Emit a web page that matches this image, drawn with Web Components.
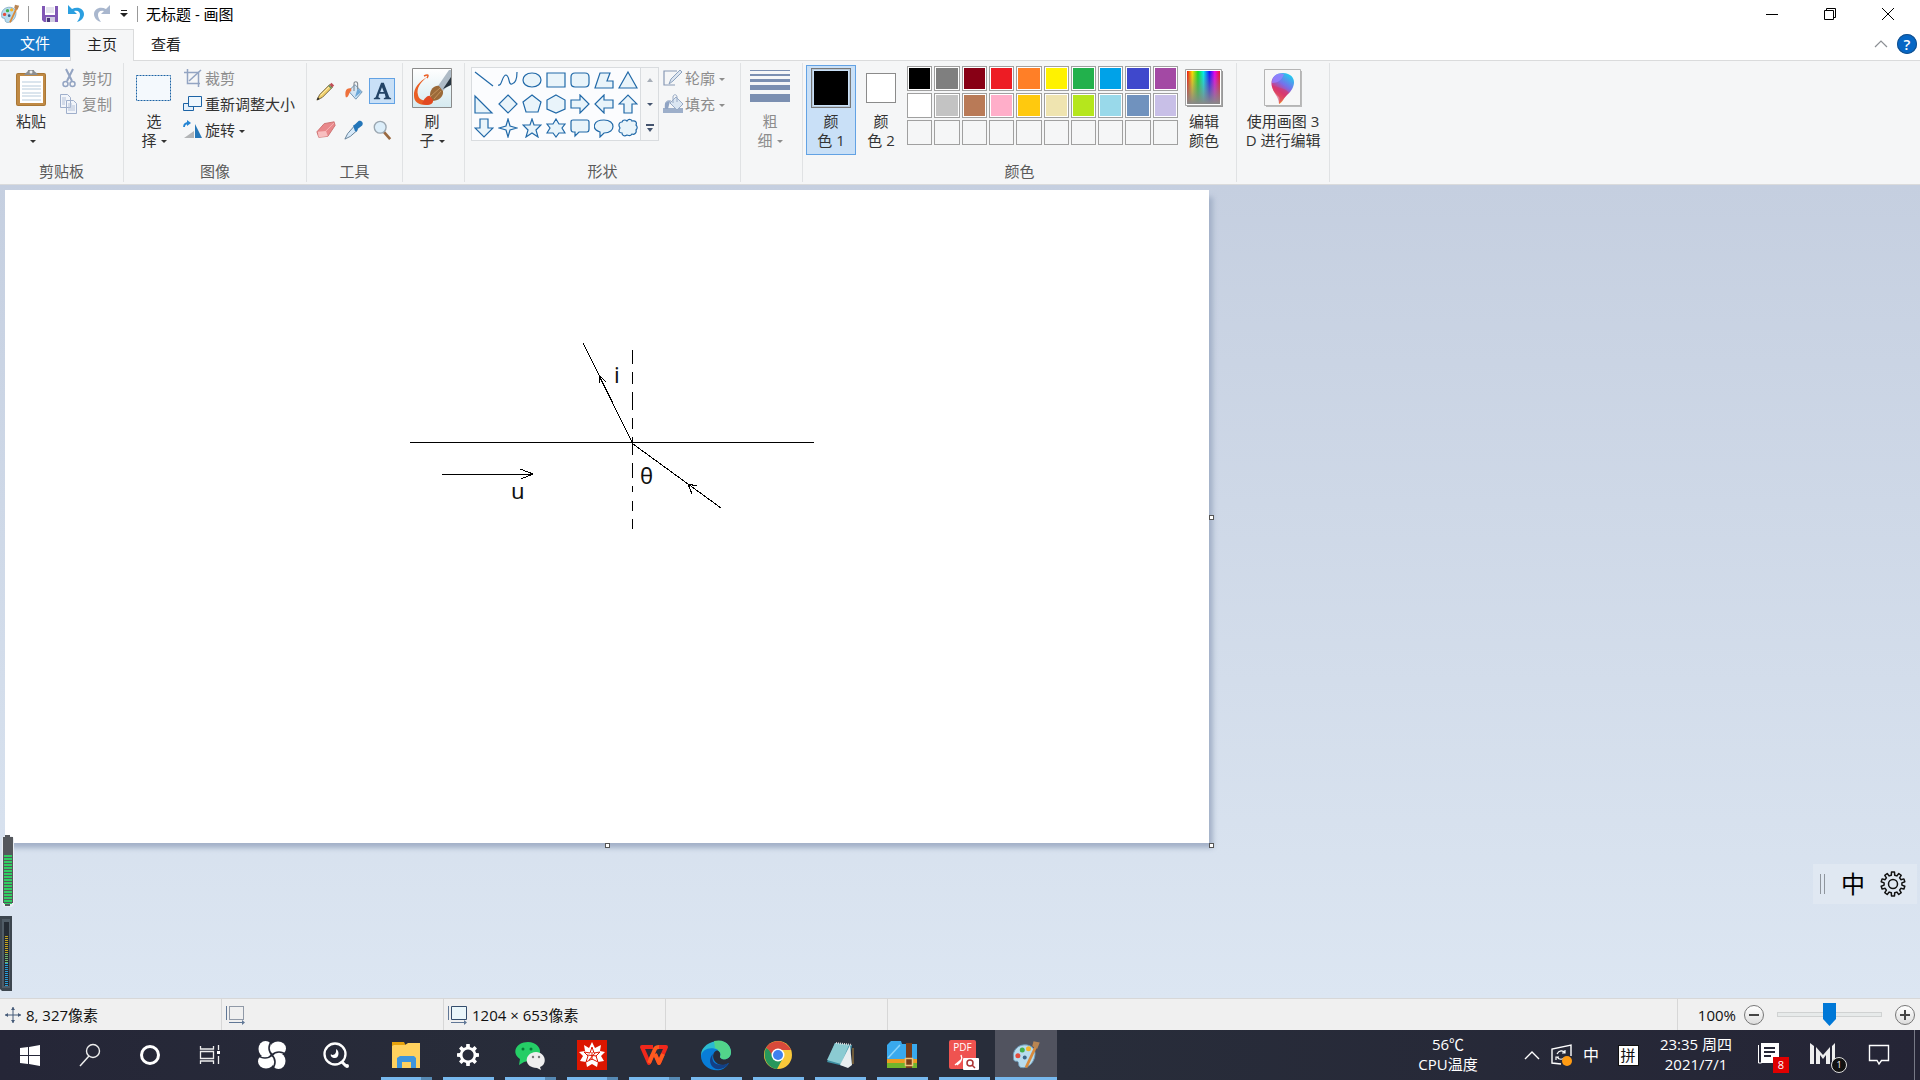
<!DOCTYPE html>
<html lang="zh-CN">
<head>
<meta charset="utf-8">
<title>无标题 - 画图</title>
<style>
    html, body {
        height: 100%;
        margin: 0;
    }

    body {
        overflow: hidden;
        font: 15px/20px "Open Sans", "Noto Sans CJK SC", sans-serif;
        color: #222;
    }
</style>
</head>
<body>
<paint-app></paint-app>

<script>
const define = (name, html, setup) => {
    const template = document.createElement('template');
    template.innerHTML = html;

    customElements.define(name, class extends HTMLElement {
        constructor() {
            super();
            this.attachShadow({ mode: 'open' });
            this.shadowRoot.appendChild(template.content.cloneNode(true));
        }

        connectedCallback() {
            if (setup) setup(this, this.shadowRoot);
        }
    });
};

// outline of a toothed wheel, centred in a box of 26
const wheel = (outer, inner, teeth) => {
    const points = [];
    for (let i = 0; i < teeth; i++) {
        [[-.3, inner], [-.2, outer], [.2, outer], [.3, inner]].forEach(([shift, r]) => {
            const a = (i + shift) / teeth * Math.PI * 2;
            points.push(`${(13 + r * Math.sin(a)).toFixed(1)} ${(13 - r * Math.cos(a)).toFixed(1)}`);
        });
    }
    return `M${points.join('L')}z`;
};

// name: [viewBox width, viewBox height, markup]
const palette = `
    <path d="M2 14C1 8 6 3 13 4c5 1 7 5 6 9-1 6-6 10-11 9-3-1-1-4-3-5-2 0-3 0-3-3z" fill="#b8dcee" stroke="#6b9ab8" stroke-width=".8"/>
    <circle cx="5.500" cy="12.500" r="2" fill="#e34b3c"/><circle cx="9" cy="8" r="2" fill="#43b04b"/>
    <circle cx="14" cy="7" r="2" fill="#f5b32a"/><circle cx="11" cy="14" r="1.600" fill="#3c6688"/>
    <path d="M20 5 12 22" stroke="#d88a3c" stroke-width="2.200"/><path d="M18 1l5 1-2 5-4-2z" fill="#b98552"/>`;

const ICONS = {
    palette: [24, 24, palette],
    save: [18, 18, `<path d="M1 1h16v16H3l-2-2z" fill="#8057b5"/><path d="M4 1h10v9H4z" fill="#fff"/><path d="M5 3h8M5 5h8M5 7h8" stroke="#c9c5dd"/><path d="M5 12h9v5H5z" fill="#cfcbe0"/><path d="M6 13h3v4H6z" fill="#49387a"/>`],
    undo: [18, 18, `<path d="M1 0v9h9L7 6c4-1 6 1 6 4 0 2-1 4-3 7 4-1 7-4 7-8 0-5-6-8-12-5z" fill="#2b9fe0"/>`],
    redo: [18, 18, `<path d="M17 0v9H8l3-3C7 5 5 7 5 10c0 2 1 4 3 7-4-1-7-4-7-8 0-5 6-8 12-5z" fill="#a9b7ce"/>`],
    more: [8, 8, `<path d="M1 .5h6" stroke="#222"/><path d="M0 3h8L4 7z" fill="#222"/>`],
    min: [14, 14, `<path d="M1 7.500h12" stroke="#000"/>`],
    restore: [14, 14, `<path d="M1.500 3.500h9v9h-9zM3.500 3v-1.500h9v9H11" fill="none" stroke="#000"/>`],
    close: [14, 14, `<path d="M1 1l12 12M13 1 1 13" stroke="#000"/>`],
    up: [14, 14, `<path d="M1 10l6-6 6 6" fill="none" stroke="#8b8f94" stroke-width="1.200"/>`],
    paste: [32, 38, `
        <rect x="1" y="4" width="30" height="33" rx="2" fill="#a97735"/><rect x="2" y="5" width="28" height="31" rx="1" fill="#c08a45"/>
        <path d="M5 7h23v27H5z" fill="#fff"/><path d="M7 13h19M7 17h19M7 20h19M7 24h19M7 27h19M7 31h19" stroke="#b7cbdc"/>
        <path d="M9 6c2-3 4-3 4-5h6c0 2 3 2 4 5z" fill="#8c8f92"/><circle cx="16" cy="3" r="1.500" fill="#eee"/>`],
    cut: [20, 20, `<path d="M6 1l6 12M13 1 7 13" stroke="#93a4c2" stroke-width="2"/><circle cx="5.500" cy="16" r="2.500" fill="none" stroke="#93a4c2" stroke-width="1.500"/><circle cx="12.500" cy="16" r="2.500" fill="none" stroke="#93a4c2" stroke-width="1.500"/>`],
    copy: [20, 20, `<path d="M.5.500h7l3 3v10H.5zM6.500 6.500h7l3 3v10h-10z" fill="#f2f5fa" stroke="#9fafcb"/><path d="M2 4h4M2 6h4M2 8h3M2 10h3M8 10h4M8 12h7M8 14h7M8 16h7" stroke="#b4c1d8"/>`],
    select: [36, 26, `<rect x=".5" y=".5" width="34" height="25" fill="#f4f9fd" stroke="#1c63a5" stroke-dasharray="2 1"/>`],
    crop: [20, 20, `<path d="M4.500 1v14.500H17M1 4.500h14.500V19" fill="none" stroke="#93a4c2" stroke-width="1.500"/><path d="M6 13 18 2" stroke="#93a4c2" stroke-width="1.500"/>`],
    resize: [20, 20, `<path d="M.5 9.500h10v7H.5z" fill="#e3effa" stroke="#1c63a5"/><path d="M5.500 2.500h13v10h-13z" fill="#edf6fd" stroke="#1c63a5"/>`],
    rotate: [20, 20, `<path d="M1 18h10V11z" fill="#b2b4b6"/><path d="M12 18V4l7 14z" fill="#2677b8"/><path d="M1 7c0-3 2-4 5-4" fill="none" stroke="#2484d3" stroke-width="1.800"/><path d="M4 0l4 3-4 3z" fill="#2484d3"/>`],
    pencil: [22, 22, `<path d="M1 21l3-6L15 4l3 3L7 18z" fill="#f1d06b" stroke="#6d5a32"/><path d="M5 16 16 5" stroke="#fff1b8"/><path d="M15 4l2-2 3 3-2 2z" fill="#c14f58"/><path d="M14 5l3 3" stroke="#5e8b67" stroke-width="1.500"/><path d="M1 21l1-3 2 2z" fill="#222"/>`],
    bucket: [22, 22, `<path d="M5 11 12 4l8 8-7 8z" fill="#d2e5f5" stroke="#638bac"/><path d="M12 18l7-6-4-4z" fill="#6ba7d8"/><path d="M8 8C1 7 1 13 2 18c4 0 3-6 6-7z" fill="#ee713c"/><path d="M11 11V3c0-3 4-3 4 0v6" fill="none" stroke="#83898f" stroke-width="1.200"/>`],
    text: [22, 22, `<path d="M10 2h3l6 16 2 1v1h-8v-1l2-1-1-4H8l-1 4 2 1v1H2v-1l2-1zM11 7l-2 5h4z" fill="#234467" fill-rule="evenodd"/>`],
    eraser: [22, 22, `<path d="M1 13 9 4l11-2 1 4-8 12-10 1z" fill="#e9888b" stroke="#c96d6d"/><path d="M2 13l9-1 2 6-10 1z" fill="#f8bfc0"/><path d="M11 12l9-9" stroke="#f8b7b8"/>`],
    dropper: [22, 22, `<path d="M1 21l3-6 7-8 4 4-8 7z" fill="#d7eafa" stroke="#5d7992"/><path d="M10 6l2-1 4-4c3-1 6 2 4 5l-5 4-1 3-2-1z" fill="#2476b9"/>`],
    lens: [22, 22, `<path d="M13 13l7 8" stroke="#9a6940" stroke-width="3"/><circle cx="9" cy="8" r="6.500" fill="#dceefa" stroke="#9ba7b1" stroke-width="1.500"/>`],
    brush: [40, 40, `
        <defs><linearGradient id="b" x2="0" y2="1"><stop stop-color="#fff"/><stop offset="1" stop-color="#d5eaf0"/></linearGradient></defs>
        <path d="M.5.500h39v39H.5z" fill="url(#b)" stroke="#8b8b8b"/>
        <path d="M15 9C9 14 4 20 6 27c1 6 9 7 14 4l1 2c0 3-3 4-7 4C7 37 2 34 2 28c-1-8 6-15 13-19z" fill="#ea5f25"/>
        <path d="M15 10c2-3 1-4-3-2" stroke="#ea5f25" fill="none" stroke-width="1.500"/>
        <path d="M26 18 37 2h2v12l-8 9z" fill="#aebbc6"/><path d="M31 21 39 9v8z" fill="#27343f"/>
        <path d="M18 27c0-6 5-10 9-9l4 5c1 6-5 10-11 10z" fill="#9b6a39"/><path d="M19 28l9-8M22 31l7-8" stroke="#c4935c"/>
        <path d="M10 36c2-6 6-9 8-8l3 4c0 4-5 6-11 4z" fill="#e14922"/>`],
    outline: [20, 20, `<path d="M14 3H1v14h11" fill="none" stroke="#8999b5" stroke-width="1.200"/><path d="M6 16l2-5 9-9 2 2-9 9z" fill="#dce5f0" stroke="#8da3bf"/>`],
    fill: [20, 20, `<path d="M0 14h20v5H0z" fill="#9dafca"/><path d="M3 14C1 8 4 6 8 7M7 9l6-6 7 7-6 6z" fill="#dbe6f2" stroke="#98aac5"/><path d="M10 9V3c0-3 4-3 4 0v5" fill="none" stroke="#98aac5"/><path d="M2 15c-1-5 1-8 5-8l-2 8z" fill="#8fa3c3"/>`],
    size: [40, 36, `<g fill="#7b8fb1"><path d="M0 0h40v1H0zM0 4h40v2H0zM0 9h40v3H0zM0 15h40v5H0zM0 24h40v8H0z"/></g>`],
    spectrum: [38, 38, `
        <defs><linearGradient id="s"><stop stop-color="#e11"/><stop offset=".16" stop-color="#fd0"/><stop offset=".33" stop-color="#1d2"/><stop offset=".5" stop-color="#0ee"/><stop offset=".68" stop-color="#11f"/><stop offset=".84" stop-color="#e0e"/><stop offset="1" stop-color="#e12"/></linearGradient>
        <linearGradient id="g" x2="0" y2="1"><stop stop-color="#888" stop-opacity="0"/><stop offset="1" stop-color="#888"/></linearGradient></defs>
        <path d="M2 2h36v36H2z" fill="#999"/><path d="M.5.500h36v36H.5z" fill="#fff" stroke="#a5a5a5"/><path d="M2 2h33v33H2z" fill="url(#s)"/><path d="M2 2h33v33H2z" fill="url(#g)"/>`],
    paint3d: [38, 38, `
        <defs><linearGradient id="p" x1=".8" x2=".3" y2="1"><stop stop-color="#18d5ef"/><stop offset=".4" stop-color="#7770ea"/><stop offset=".65" stop-color="#dc3774"/><stop offset="1" stop-color="#ffbd19"/></linearGradient></defs>
        <path d="M2 2h36v36H2z" fill="#bbb"/><path d="M.5.500h36v36H.5z" fill="#f7f7f7" stroke="#b5b5b5"/>
        <path d="M19 4c15 1 13 15 4 22-4 4-4 7-8 9 0-3 1-5 0-7C3 18 6 4 19 4z" fill="url(#p)"/><path d="M8 14C8 6 15 3 20 5c-2 6-6 9-12 9z" fill="#987fff" opacity=".8"/><path d="M8 16c8 4 12 2 17 8-5 4-6 7-10 11 0-8-6-10-7-19z" fill="#d73769" opacity=".6"/>`],
    move: [18, 18, `<path d="M9 1v16M1 9h16" stroke="#455a78"/><path d="M7 4l2-3 2 3zM7 14l2 3 2-3zM4 7 1 9l3 2zM14 7l3 2-3 2z" fill="#455a78"/>`],
    selsize: [20, 20, `<path d="M3.500 1.500h14v13h-14z" fill="none" stroke="#31435e" stroke-dasharray="1 1"/><path d="M.5 1v14M3 17.500h15" stroke="#607796"/><path d="M16 15l3 2.500-3 2.500z" fill="#607796"/>`],
    docsize: [20, 20, `<path d="M3.500 1.500h15v13h-15z" fill="#eaf6fa" stroke="#344d6c"/><path d="M.5 1v14M3 17.500h15" stroke="#607796"/><path d="M16 15l3 2.500-3 2.500z" fill="#607796"/>`],
    gear: [26, 26, `<path d="${wheel(12, 9, 10)}" fill="none" stroke="#111" stroke-width="1.500" stroke-linejoin="round"/><circle cx="13" cy="13" r="4.500" fill="none" stroke="#111" stroke-width="1.500"/>`],
    start: [20, 22, `<path d="M0 4l8-1v8H0zM9 3l11-2v10H9zM0 12h8v8l-8-1zM9 12h11v10L9 20z" fill="#fff"/>`],
    search: [22, 24, `<circle cx="14" cy="8" r="6.500" fill="none" stroke="#eee" stroke-width="1.400"/><path d="M10 13 1 23" stroke="#eee" stroke-width="1.500"/>`],
    cortana: [22, 22, `<circle cx="11" cy="11" r="8.500" fill="none" stroke="#fff" stroke-width="3"/>`],
    taskview: [22, 22, `<path d="M1.500 2v3h13V2M1.500 20v-3h13v3M1.500 7.500h13v7h-13z" fill="none" stroke="#eee" stroke-width="1.300"/><path d="M19.500 1v5M19.500 12v8" stroke="#eee" stroke-width="1.300"/><path d="M18 7h3v3h-3z" fill="#fff"/>`],
    pinwheel: [28, 28, `
        <g fill="#fff">${[0, 90, 180, 270].map((a) => `<ellipse cx="20" cy="7.500" rx="8" ry="7" transform="rotate(${a} 14 14)"/>`).join('')}</g>
        <g fill="none" stroke="#252836" stroke-width="1.600">${[0, 90, 180, 270].map((a) => `<path d="M14 14c-4-4-4-10 0-14" transform="rotate(${a} 14 14)"/>`).join('')}</g>`],
    eye: [26, 26, `<circle cx="12" cy="12" r="10.500" fill="none" stroke="#fff" stroke-width="2.300"/><path d="M19 20l4 4" stroke="#fff" stroke-width="3"/><circle cx="24" cy="24" r="2" fill="#fff"/><path d="M13 7c4 2 3 9-1 9-3 0-5-2-4-4 1 2 6 1 5-5z" fill="#fff"/>`],
    folder: [28, 26, `<path d="M0 0h12l2 4H0z" fill="#e6a20c"/><path d="M0 4l2-1h11l3-2h12v25H0z" fill="#ffd15e"/><path d="M5 26V16l3-2h14l2 2v10h-5v-6h-9v6z" fill="#3f95dc"/>`],
    cog: [26, 26, `<path d="${wheel(12, 9, 8)}M13 7a6 6 0 1 0 .1 0z" fill="#fff" fill-rule="evenodd"/>`],
    wechat: [30, 30, `<path d="M13 2c16 1 16 18 0 19l-4 1-5 3 1-6C-4 13 1 2 13 2z" fill="#25ce66"/><circle cx="8" cy="9" r="1.500" fill="#087b38"/><circle cx="16" cy="9" r="1.500" fill="#087b38"/><path d="M21 12c11 1 11 13 4 15l1 3-4-2c-13 0-14-15-1-16z" fill="#eee"/><circle cx="18" cy="17" r="1.200" fill="#777"/><circle cx="24" cy="17" r="1.200" fill="#777"/>`],
    wolfram: [30, 30, `<path d="M0 0h30v30H0z" fill="#dc1600"/><path d="M15 2l3 6 6-3-1 6 5 1-4 4 3 5-6 1-1 5-5-3-5 3-1-5-6-1 3-5-4-4 6-1-1-6 5 3z" fill="#fff"/><path d="M15 7l2 6 6-1-4 4 2 6-6-3-6 3 2-6-4-4 6 1zM15 12v8M10 15l10 1M12 20l6-7" fill="none" stroke="#dc1600"/>`],
    wps: [30, 24, `<g fill="none" stroke-width="4" stroke-linejoin="round"><path d="M14 4H3l7 16 4-9" stroke="#f0281c"/><path d="M20 4h7l-7 16-4-9" stroke="#f0281c"/><path d="M10 20l6-14q1-2 4-2M16 11l4 9 4-9" stroke="#ff5a1f"/></g>`],
    edge: [30, 30, `<path d="M0 15C0 0 29-6 30 12c0 8-9 9-11 5 2-4-2-8-7-7-5 0-12 3-12 10z" fill="#2bbbd0"/><path d="M13 1c12-3 17 6 17 11 0 8-9 9-11 5 2-4-1-7-5-9z" fill="#52d48a"/><path d="M0 16C1 9 10 6 17 10c-6 1-7 10 0 14 4 2 8 1 11-1-8 14-28 6-28-7z" fill="#087dd7"/><path d="M12 14c-3 8 4 14 16 9-6 9-18 8-19-2 0-3 1-5 3-7z" fill="#143f84"/>`],
    chrome: [28, 28, `<circle cx="14" cy="14" r="14" fill="#f9c83a"/><path d="M14 14 2 7C6 0 22-2 27 9H14z" fill="#d84a3b"/><path d="M2 7C-2 16 3 27 13 28l6-11-5-3z" fill="#27975b"/><path d="M3 6l7 11 4-8h12C21-3 7-1 3 6z" fill="#d84a3b"/><circle cx="14" cy="14" r="6.500" fill="#fff"/><circle cx="14" cy="14" r="5" fill="#4080ee"/>`],
    note: [28, 28, `<path d="M9 2l17 2-4 22-21-5z" fill="#3f91a4"/><path d="M9 2l14 2-8 19L1 19z" fill="#8bcbd2"/><path d="M24 4l2 20-4 3-8-3z" fill="#e8eef0"/><path d="M10 2l16 2" stroke="#ddd" stroke-width="2" stroke-dasharray="1 1"/><path d="M27 7v16" stroke="#b58a3a"/>`],
    archive: [30, 28, `<path d="M0 4l4-4h10l1 3h15v15H0z" fill="#39a9ed"/><path d="M0 18h30v5H0z" fill="#ed9b20"/><path d="M0 22h30v5H0z" fill="#70b52c"/><path d="M1 17 13 4" stroke="#8bd5fa" stroke-width="1.500"/><path d="M19 2h6v25h-6z" fill="#773c19"/><path d="M18.500 17.500h7v7h-7z" fill="none" stroke="#ebc37c" stroke-width="1.500"/>`],
    monitor: [22, 22, `<path d="M20 12V1L1 5v14l9 1" fill="none" stroke="#fff" stroke-width="1.400"/><path d="M6 10c2-4 6-4 8-1M14 6v3h-3M14 13c-2 3-6 3-8 0M5 16v-3h3" fill="none" stroke="#fff" stroke-width="1.200"/><circle cx="16" cy="17" r="5" fill="#ff9b13"/>`],
    trayup: [16, 12, `<path d="M1 10l7-7 7 7" fill="none" stroke="#fff" stroke-width="1.400"/>`],
    news: [22, 22, `<path d="M3 1h18v20H3z" fill="#fff"/><path d="M6 6h11M6 10h11M6 14h7" stroke="#252636" stroke-width="2"/><path d="M.5 3v18h3" fill="none" stroke="#fff"/>`],
    mail: [28, 22, `<path d="M0 1l4 3v18H0zM6 22V5l7 8 7-8v17h-4v-9l-3 4-3-4v9zM22 22V4l3-3v21z" fill="#eee"/>`],
    notice: [22, 22, `<path d="M1.500 1.500h19v15h-7L11 20l-2-3.500H1.500z" fill="none" stroke="#fff" stroke-width="1.400"/>`],
};

const SHAPES = {
    直线: 'M1 2l18 14',
    曲线: 'M0 15c4 2 4-10 8-10 4 1 2 10 6 9 4-1 5-7 5-12',
    椭圆形: 'M10 3c12 0 12 14 0 14S-2 3 10 3z',
    矩形: 'M1 3h18v14H1z',
    圆角矩形: 'M5 3h10q4 0 4 4v6q0 4-4 4H5q-4 0-4-4V7q0-4 4-4z',
    多边形: 'M6 3h10l-3 8h6v7H1z',
    三角形: 'M10 2l9 16H1z',
    直角三角形: 'M1 2v17h17z',
    菱形: 'M10 1l9 9-9 9-9-9z',
    五边形: 'M10 1l9 7-3 10H4L1 8z',
    六边形: 'M10 1l9 5v9l-9 4-9-4V6z',
    右箭头: 'M1 6h9V1l9 9-9 9v-5H1z',
    左箭头: 'M19 6h-9V1l-9 9 9 9v-5h9z',
    上箭头: 'M6 19v-9H1l9-9 9 9h-5v9z',
    下箭头: 'M6 1v9H1l9 9 9-9h-5V1z',
    四角星形: 'M10 1l2 7 7 2-7 2-2 7-2-7-7-2 7-2z',
    五角星形: 'M10 1l2 6h7l-5 5 2 7-6-4-6 4 2-7-5-5h7z',
    六角星形: 'M10 1l3 5h6l-3 4 3 5h-6l-3 4-3-4H1l3-5-3-4h6z',
    圆角矩形标注: 'M3 2h14q2 0 2 2v7q0 3-2 3H9l-4 4v-4H3q-2 0-2-3V4q0-2 2-2z',
    椭圆形标注: 'M10 2c12 0 12 13 0 13l-4 4v-5C-3 11-1 2 10 2z',
    云形标注: 'M4 4c1-3 4-2 5-1 2-3 5-1 5 0 4-1 5 2 4 4 2 2 1 4 0 5 1 3-2 5-4 4-2 3-4 1-5 1-3 2-5 0-5-2-3 0-4-2-2-5C0 7 1 4 4 4z',
};

const COLORS = [
    '#000000', '#7f7f7f', '#880015', '#ed1c24', '#ff7f27', '#fff200', '#22b14c', '#00a2e8', '#3f48cc', '#a349a4',
    '#ffffff', '#c3c3c3', '#b97a57', '#ffaec9', '#ffc90e', '#efe4b0', '#b5e61d', '#99d9ea', '#7092be', '#c8bfe7',
    '', '', '', '', '', '', '', '', '', '',
];

// shared reset for native buttons inside shadow roots
const reset = `
    button {
        margin: 0;
        padding: 0;
        border: 0;
        background: none;
        color: inherit;
        font: inherit;
        display: flex;
        align-items: center;
        justify-content: center;
    }
`;

define('paint-icon', `
    <style>
        :host { display: inline-flex; flex: none; }
        svg { display: block; overflow: visible; }
    </style>
    <svg aria-hidden="true"></svg>
`, (host, root) => {
    const [w, h, markup] = ICONS[host.getAttribute('name')];
    const svg = root.querySelector('svg');
    const size = Number(host.getAttribute('size')) || w;
    svg.setAttribute('viewBox', `0 0 ${w} ${h}`);
    svg.setAttribute('width', size);
    svg.setAttribute('height', Math.round(size * h / w));
    svg.innerHTML = markup;
});

define('drop-arrow', `
    <style>
        :host {
            display: inline-block;
            vertical-align: middle;
            margin-left: 4px;
            border: 3px solid transparent;
            border-top-color: currentColor;
            border-bottom: 0;
        }
    </style>
`);

define('title-bar', `
    <style>
        ${reset}
        :host { display: flex; height: 29px; background: #fff; color: #000; }
        .quick { display: flex; align-items: center; gap: 8px; flex: 1; padding-bottom: 1px; }
        .quick i { width: 1px; height: 16px; background: #999; }
        .quick button { width: 18px; height: 20px; }
        .quick .save { margin-left: 4px; }
        .quick .more { width: 10px; }
        .controls { display: flex; padding: 0 3px 1px 0; }
        .controls button { width: 58px; }
    </style>
    <div class="quick">
        <paint-icon name="palette" size="20"></paint-icon><i></i>
        <button class="save" aria-label="保存"><paint-icon name="save"></paint-icon></button>
        <button aria-label="撤消"><paint-icon name="undo"></paint-icon></button>
        <button aria-label="重做"><paint-icon name="redo"></paint-icon></button>
        <button class="more" aria-label="自定义"><paint-icon name="more"></paint-icon></button><i></i>
        <span>无标题 - 画图</span>
    </div>
    <div class="controls">
        <button aria-label="最小化"><paint-icon name="min"></paint-icon></button>
        <button aria-label="还原"><paint-icon name="restore"></paint-icon></button>
        <button aria-label="关闭"><paint-icon name="close"></paint-icon></button>
    </div>
`);

define('ribbon-tabs', `
    <style>
        ${reset}
        :host { display: flex; height: 31px; background: #fff; border-bottom: 1px solid #dadbdc; }
        button { width: 64px; height: 30px; }
        .file { width: 70px; height: 28px; background: #1979ca; color: #fff; }
        .active { box-sizing: border-box; height: 32px; padding-bottom: 3px; border: 1px solid #dadbdc; border-bottom: 0; background: #f5f6f7; }
        .right { display: flex; align-items: center; gap: 6px; margin-left: auto; padding: 0 3px 2px 0; }
        .right button { width: 20px; height: 20px; }
        .help { border-radius: 50%; background: #0667c5; box-shadow: inset 0 0 0 1px #16508b; color: #fff; font-weight: 600; }
    </style>
    <button class="file">文件</button>
    <button class="active">主页</button>
    <button>查看</button>
    <div class="right">
        <button aria-label="最小化功能区"><paint-icon name="up"></paint-icon></button>
        <button class="help">?</button>
    </div>
`);

define('ribbon-group', `
    <style>
        :host {
            display: flex;
            flex-direction: column;
            box-sizing: border-box;
            height: 119px;
            border-right: 1px solid #e0e2e4;
        }
        .body { display: flex; align-items: flex-start; flex: 1; padding: 0 3px; }
        .label { height: 22px; line-height: 22px; text-align: center; color: #5a5a5a; }
    </style>
    <div class="body"><slot></slot></div>
    <div class="label"></div>
`, (host, root) => {
    root.querySelector('.label').textContent = host.getAttribute('label') || '';
});

define('big-button', `
    <style>
        ${reset}
        :host { display: block; min-width: 50px; margin-top: 2px; }
        button {
            flex-direction: column;
            justify-content: flex-start;
            box-sizing: border-box;
            width: 100%;
            height: 90px;
            padding-top: 2px;
            border: 1px solid transparent;
        }
        :host([disabled]) { color: #8d8d8d; }
        :host([active]) button { background: #c9e0f7; border-color: #62a2e4; }
        .icon { display: flex; align-items: center; height: 40px; margin-bottom: 4px; }
        .text { line-height: 19px; text-align: center; white-space: nowrap; }
    </style>
    <button><span class="icon"><slot name="icon"></slot></span><span class="text"><slot></slot></span></button>
`, (host, root) => {
    root.querySelector('button').disabled = host.hasAttribute('disabled');
});

define('small-button', `
    <style>
        ${reset}
        :host { display: block; height: 26px; }
        :host([disabled]) { color: #8d8d8d; }
        button { height: 26px; gap: 2px; white-space: nowrap; }
    </style>
    <button><slot name="icon"></slot><span><slot></slot></span></button>
`, (host, root) => {
    root.querySelector('button').disabled = host.hasAttribute('disabled');
});

define('button-stack', `
    <style>
        :host { display: block; padding: 2px 8px 0 4px; }
    </style>
    <slot></slot>
`);

define('tool-grid', `
    <style>
        ${reset}
        :host { display: grid; grid-template-columns: repeat(3, 26px); gap: 13px 2px; padding: 15px 4px 0 3px; }
        button { box-sizing: border-box; height: 26px; border: 1px solid transparent; }
        .active { background: #c9e0f7; border-color: #62a2e4; }
    </style>
    <button aria-label="铅笔"><paint-icon name="pencil" size="20"></paint-icon></button>
    <button aria-label="用颜色填充"><paint-icon name="bucket" size="20"></paint-icon></button>
    <button aria-label="文本" class="active"><paint-icon name="text" size="20"></paint-icon></button>
    <button aria-label="橡皮擦"><paint-icon name="eraser" size="20"></paint-icon></button>
    <button aria-label="颜色选取器"><paint-icon name="dropper" size="20"></paint-icon></button>
    <button aria-label="放大镜"><paint-icon name="lens" size="20"></paint-icon></button>
`);

define('shape-gallery', `
    <style>
        ${reset}
        :host { display: flex; margin: 4px 0 0 3px; border: 1px solid #d9dcdf; background: #fbfcfe; }
        .shapes { display: grid; grid-template-columns: repeat(7, 24px); grid-auto-rows: 24px; }
        .scroll { display: grid; width: 17px; border-left: 1px solid #d9dcdf; background: #f5f6f7; color: #44546f; }
        svg { display: block; }
        path { fill: #e9f4fa; stroke: #2169a8; stroke-width: 1.2; }
        .open { fill: none; }
        .scroll path { fill: currentColor; stroke: none; }
        .dim { color: #a7aeb8; }
    </style>
    <div class="shapes"></div>
    <div class="scroll">
        <button class="dim" aria-label="上一行"><svg width="8" height="8"><path d="M1 6l3-4 3 4z"/></svg></button>
        <button aria-label="下一行"><svg width="8" height="8"><path d="M1 3h6L4 6z"/></svg></button>
        <button aria-label="全部形状"><svg width="8" height="8"><path d="M0 0h8v2H0zM1 4h6L4 8z"/></svg></button>
    </div>
`, (host, root) => {
    root.querySelector('.shapes').innerHTML = Object.entries(SHAPES).map(([name, d], i) => `
        <button aria-label="${name}"><svg width="20" height="20"><path class="${i < 2 ? 'open' : ''}" d="${d}"/></svg></button>
    `).join('');
});

define('color-swatch', `
    <style>
        :host { display: block; box-sizing: border-box; width: 30px; height: 30px; border: 1px solid #8b8b8b; background: #fff; }
        :host([large]) { width: 40px; height: 40px; padding: 2px; border: 1px solid #777; background: #000 content-box; box-shadow: inset 0 0 0 1px #b7c8d8; }
    </style>
`);

define('color-palette', `
    <style>
        ${reset}
        :host { display: grid; grid-template-columns: repeat(10, 1fr); grid-auto-rows: 25px; gap: 2px; width: 271px; margin: 3px 1px 0 1px; }
        button { box-sizing: border-box; border: 1px solid #a0a0a0; padding: 1px; }
        .filled { background-color: var(--color); box-shadow: inset 0 0 0 1px #fff; }
    </style>
`, (host, root) => {
    COLORS.forEach((color) => {
        const button = document.createElement('button');
        button.setAttribute('aria-label', color || '自定义颜色');
        if (color) {
            button.className = 'filled';
            button.style.setProperty('--color', color);
        }
        root.appendChild(button);
    });
});

define('paint-ribbon', `
    <style>
        :host { display: flex; padding: 2px 0; background: #f5f6f7; border-bottom: 1px solid #dadbdc; color: #333; }
        .first { margin-left: 3px; }
        .select { margin-left: 2px; }
        .brush, .size { margin: 2px 4px 0 1px; }
        .shapes { padding-right: 12px; }
        .edit { margin-right: 4px; }
        .wide { width: 86px; }
    </style>
    <ribbon-group label="剪贴板">
        <big-button class="first"><paint-icon slot="icon" name="paste"></paint-icon>粘贴<br><drop-arrow></drop-arrow></big-button>
        <button-stack>
            <small-button disabled><paint-icon slot="icon" name="cut"></paint-icon>剪切</small-button>
            <small-button disabled><paint-icon slot="icon" name="copy"></paint-icon>复制</small-button>
        </button-stack>
    </ribbon-group>
    <ribbon-group label="图像">
        <big-button class="select"><paint-icon slot="icon" name="select"></paint-icon>选<br>择<drop-arrow></drop-arrow></big-button>
        <button-stack>
            <small-button disabled><paint-icon slot="icon" name="crop"></paint-icon>裁剪</small-button>
            <small-button><paint-icon slot="icon" name="resize"></paint-icon>重新调整大小</small-button>
            <small-button><paint-icon slot="icon" name="rotate"></paint-icon>旋转<drop-arrow></drop-arrow></small-button>
        </button-stack>
    </ribbon-group>
    <ribbon-group label="工具"><tool-grid></tool-grid></ribbon-group>
    <ribbon-group>
        <big-button class="brush"><paint-icon slot="icon" name="brush"></paint-icon>刷<br>子<drop-arrow></drop-arrow></big-button>
    </ribbon-group>
    <ribbon-group label="形状">
        <shape-gallery></shape-gallery>
        <button-stack class="shapes">
            <small-button disabled><paint-icon slot="icon" name="outline"></paint-icon>轮廓<drop-arrow></drop-arrow></small-button>
            <small-button disabled><paint-icon slot="icon" name="fill"></paint-icon>填充<drop-arrow></drop-arrow></small-button>
        </button-stack>
    </ribbon-group>
    <ribbon-group>
        <big-button disabled class="size"><paint-icon slot="icon" name="size"></paint-icon>粗<br>细<drop-arrow></drop-arrow></big-button>
    </ribbon-group>
    <ribbon-group label="颜色">
        <big-button active><color-swatch slot="icon" large></color-swatch>颜<br>色 1</big-button>
        <big-button><color-swatch slot="icon"></color-swatch>颜<br>色 2</big-button>
        <color-palette></color-palette>
        <big-button class="edit"><paint-icon slot="icon" name="spectrum"></paint-icon>编辑<br>颜色</big-button>
    </ribbon-group>
    <ribbon-group>
        <big-button class="wide"><paint-icon slot="icon" name="paint3d"></paint-icon>使用画图 3<br>D 进行编辑</big-button>
    </ribbon-group>
`);

define('paint-canvas', `
    <style>
        :host {
            display: block;
            position: relative;
            width: 1204px;
            height: 653px;
            background: #fff;
            box-shadow: 5px 6px 5px -1px #a3b1c8;
        }
        svg { display: block; }
        .lines { fill: none; stroke: #000; }
        .slanted { shape-rendering: crispEdges; }
        text { font-size: 22px; font-family: "Noto Sans", sans-serif; fill: #111; }
        i { position: absolute; width: 3px; height: 3px; border: 1px solid #555; background: #fff; }
        .e { left: 100%; top: calc(50% - 2px); }
        .s { left: calc(50% - 2px); top: 100%; }
        .se { left: 100%; top: 100%; }
    </style>
    <svg width="1204" height="653">
        <g class="lines">
            <path d="M405 252.500h404M437 284.500h91"/>
            <path d="M627.500 160v14M627.500 182v12M627.500 202v18M627.500 228v11M627.500 247v18M627.500 273v15M627.500 296v6M627.500 311v10M627.500 329v10"/>
            <path class="slanted" d="M515 279l13 5-12 5M578 153l49 99M601 192l-7-7 1 8"/>
            <path class="slanted" d="M628 254l88 64M692 296l-9-2 4 10"/>
        </g>
        <text x="609" y="193">i</text>
        <text x="635" y="294">θ</text>
        <text x="506" y="309">u</text>
    </svg>
    <i class="e"></i><i class="s"></i><i class="se"></i>
`);

define('status-bar', `
    <style>
        ${reset}
        :host { display: flex; height: 31px; background: #f0f0f0; border-top: 1px solid #d7d7d7; color: #111; }
        .cell { display: flex; align-items: center; gap: 4px; box-sizing: border-box; width: 222px; padding-left: 4px; border-right: 1px solid #d7d7d7; }
        .cell:first-child { padding-left: 2px; }
        .zoom { display: flex; align-items: center; gap: 8px; margin-left: auto; padding: 0 5px 0 20px; border-left: 1px solid #d7d7d7; }
        .zoom button { box-sizing: border-box; width: 20px; height: 20px; border: 1px solid #777; border-radius: 50%; background: linear-gradient(#fff, #ddd); }
        label { display: flex; align-items: center; }
        input { appearance: none; width: 105px; height: 24px; margin: 0 5px; background: none; }
        input::-webkit-slider-runnable-track { height: 5px; background: #e7eaea; border: 1px solid #d0d2d2; box-sizing: border-box; }
        input::-webkit-slider-thumb {
            appearance: none;
            width: 13px;
            height: 23px;
            margin-top: -10px;
            background: #0078d7;
            clip-path: polygon(0 0, 100% 0, 100% 70%, 50% 100%, 0 70%);
        }
        svg { display: block; stroke: #444; stroke-width: 2; }
    </style>
    <div class="cell"><paint-icon name="move"></paint-icon><span>8, 327像素</span></div>
    <div class="cell"><paint-icon name="selsize"></paint-icon></div>
    <div class="cell"><paint-icon name="docsize"></paint-icon><span>1204 × 653像素</span></div>
    <div class="cell"></div>
    <div class="zoom">
        <label for="zoom">100%</label>
        <button aria-label="缩小"><svg width="10" height="10"><path d="M0 5h10"/></svg></button>
        <input id="zoom" type="range" min="0" max="100" value="50">
        <button aria-label="放大"><svg width="10" height="10"><path d="M0 5h10M5 0v10"/></svg></button>
    </div>
`);

define('task-button', `
    <style>
        ${reset}
        :host { display: block; width: 62px; }
        button { position: relative; width: 100%; height: 50px; }
        :host([wide]) { width: 64px; }
        :host([plain]) { width: 60px; }
        :host([running]) button::after {
            content: "";
            position: absolute;
            left: 6px;
            right: 5px;
            bottom: 0;
            height: 3px;
            background: #77b8ed;
        }
        :host([many]) button::after { background: linear-gradient(90deg, #77b8ed 40px, #5689b3 40px); }
        :host([active]) button { background: #51535f; }
        :host([active]) button::after { left: 0; right: 0; }
    </style>
    <button><slot></slot></button>
`, (host, root) => {
    root.querySelector('button').setAttribute('aria-label', host.getAttribute('label'));
});

define('pdf-icon', `
    <style>
        :host { display: block; position: relative; box-sizing: border-box; width: 30px; height: 30px; }
        .page { width: 27px; height: 29px; border-radius: 2px; background: #ef5350; color: #fff; font-size: 10px; line-height: 15px; text-align: center; }
        svg { position: absolute; left: 0; top: 0; }
    </style>
    <div class="page">PDF</div>
    <svg width="30" height="30"><path d="M12 15c2 4-1 8-4 10M12 20l-6 5" fill="none" stroke="#fff" stroke-width="1.500"/><rect x="14" y="18" width="16" height="12" rx="1" fill="#fff"/><circle cx="21" cy="23" r="3" fill="none" stroke="#a33" stroke-width="1.500"/><path d="M23 25l3 3" stroke="#a33" stroke-width="1.500"/></svg>
`);

define('tray-badge', `
    <style>
        :host { display: block; position: relative; }
        span {
            position: absolute;
            right: -9px;
            bottom: -5px;
            width: 16px;
            height: 16px;
            background: #e00000;
            color: #fff;
            font-size: 11px;
            line-height: 16px;
            text-align: center;
        }
        :host([round]) span { box-sizing: border-box; border: 1px solid #ddd; border-radius: 50%; background: #111; font-size: 9px; line-height: 14px; }
    </style>
    <slot></slot><span></span>
`, (host, root) => {
    root.querySelector('span').textContent = host.getAttribute('count');
});

define('task-bar', `
    <style>
        ${reset}
        :host { display: flex; height: 50px; background: linear-gradient(90deg, #252637, #282d3a 30%, #282d3a 55%, #252536); color: #fff; }
        .apps { display: flex; margin-left: 7px; }
        .tray { display: flex; align-items: center; margin-left: auto; }
        .tray button { height: 50px; }
        .two { line-height: 20px; text-align: center; padding-bottom: 2px; }
        .pin { width: 19px; height: 19px; background: #fff; color: #111; line-height: 18px; outline: 1px solid #111; text-align: center; }
        .ime { font-size: 16px; }
        .tray .desktop { width: 6px; box-sizing: border-box; border-left: 1px solid #777986; }
    </style>
    <task-button plain label="开始"><paint-icon name="start"></paint-icon></task-button>
    <task-button plain label="搜索"><paint-icon name="search"></paint-icon></task-button>
    <task-button plain label="Cortana"><paint-icon name="cortana"></paint-icon></task-button>
    <task-button plain label="任务视图"><paint-icon name="taskview"></paint-icon></task-button>
    <task-button wide label="启动器"><paint-icon name="pinwheel"></paint-icon></task-button>
    <task-button wide label="查找"><paint-icon name="eye"></paint-icon></task-button>
    <div class="apps">
        <task-button running many label="文件资源管理器"><paint-icon name="folder"></paint-icon></task-button>
        <task-button running label="设置"><paint-icon name="cog" size="24"></paint-icon></task-button>
        <task-button running many label="微信"><paint-icon name="wechat"></paint-icon></task-button>
        <task-button running many label="Mathematica"><paint-icon name="wolfram"></paint-icon></task-button>
        <task-button running many label="WPS"><paint-icon name="wps"></paint-icon></task-button>
        <task-button running label="Edge"><paint-icon name="edge"></paint-icon></task-button>
        <task-button running label="Chrome"><paint-icon name="chrome"></paint-icon></task-button>
        <task-button running label="记事本"><paint-icon name="note"></paint-icon></task-button>
        <task-button running label="压缩"><paint-icon name="archive"></paint-icon></task-button>
        <task-button running label="PDF"><pdf-icon></pdf-icon></task-button>
        <task-button running active label="画图"><paint-icon name="palette" size="30"></paint-icon></task-button>
    </div>
    <div class="tray">
        <div class="two" style="width: 76px">56℃<br>CPU温度</div>
        <button style="width: 32px; margin-left: 30px" aria-label="显示隐藏的图标"><paint-icon name="trayup"></paint-icon></button>
        <button style="width: 28px" aria-label="更新"><paint-icon name="monitor"></paint-icon></button>
        <button class="ime" style="width: 30px">中</button>
        <button style="width: 44px"><span class="pin">拼</span></button>
        <button class="two" style="width: 92px">23:35 周四<br>2021/7/1</button>
        <button style="width: 54px" aria-label="资讯"><tray-badge count="8"><paint-icon name="news"></paint-icon></tray-badge></button>
        <button style="width: 56px" aria-label="邮件"><tray-badge round count="1"><paint-icon name="mail"></paint-icon></tray-badge></button>
        <button style="width: 54px; margin-right: 8px" aria-label="通知"><paint-icon name="notice"></paint-icon></button>
        <button class="desktop" aria-label="显示桌面"></button>
    </div>
`);

define('input-bar', `
    <style>
        ${reset}
        :host { display: flex; align-items: center; box-sizing: border-box; width: 104px; height: 40px; padding: 0 11px 0 7px; background: #e0e8f2; }
        i { flex: none; width: 3px; height: 20px; border: solid #8f959d; border-width: 0 1px; }
        button { flex: none; margin-left: 16px; font-size: 24px; line-height: 30px; color: #000; }
        button:last-child { margin-left: auto; }
    </style>
    <i></i><button>中</button><button aria-label="设置"><paint-icon name="gear"></paint-icon></button>
`);

// desktop meters that hang on the left edge of the screen
define('edge-meters', `
    <style>
        :host { display: block; }
        svg { display: block; }
    </style>
    <svg width="16" height="160">
        <rect x="2" y="1" width="12" height="71" rx="4" fill="#e9edf2"/>
        <path d="M5 0h5v2h3v66h-3v3H5v-3H3V2h2z" fill="#55585c"/>
        <path d="M8 20v49" stroke="#30ce62" stroke-width="8" stroke-dasharray="2 1"/>
        <path d="M0 81h12v75H2l-2-2z" fill="#3d464f"/><path d="M2 84h8v69H2z" fill="#505c66"/><path d="M4 87h5v64H4z" fill="#252c34"/>
        <path d="M6.500 101v18" stroke="#c4a51d" stroke-width="3" stroke-dasharray="1 1"/>
        <path d="M6.500 119v9" stroke="#73b66c" stroke-width="3" stroke-dasharray="1 1"/>
        <path d="M6.500 128v23" stroke="#299ed8" stroke-width="3" stroke-dasharray="1 1"/>
    </svg>
`);

define('paint-app', `
    <style>
        :host { display: flex; flex-direction: column; height: 100vh; position: relative; }
        main { flex: 1; min-height: 0; overflow: hidden; padding: 5px; background: linear-gradient(#c5cfe0, #dce6f2); }
        edge-meters { position: absolute; left: 0; bottom: 85px; }
        input-bar { position: absolute; right: 3px; bottom: 176px; }
    </style>
    <title-bar></title-bar>
    <ribbon-tabs></ribbon-tabs>
    <paint-ribbon></paint-ribbon>
    <main><paint-canvas></paint-canvas></main>
    <status-bar></status-bar>
    <task-bar></task-bar>
    <edge-meters></edge-meters>
    <input-bar></input-bar>
`);
</script>
</body>
</html>
